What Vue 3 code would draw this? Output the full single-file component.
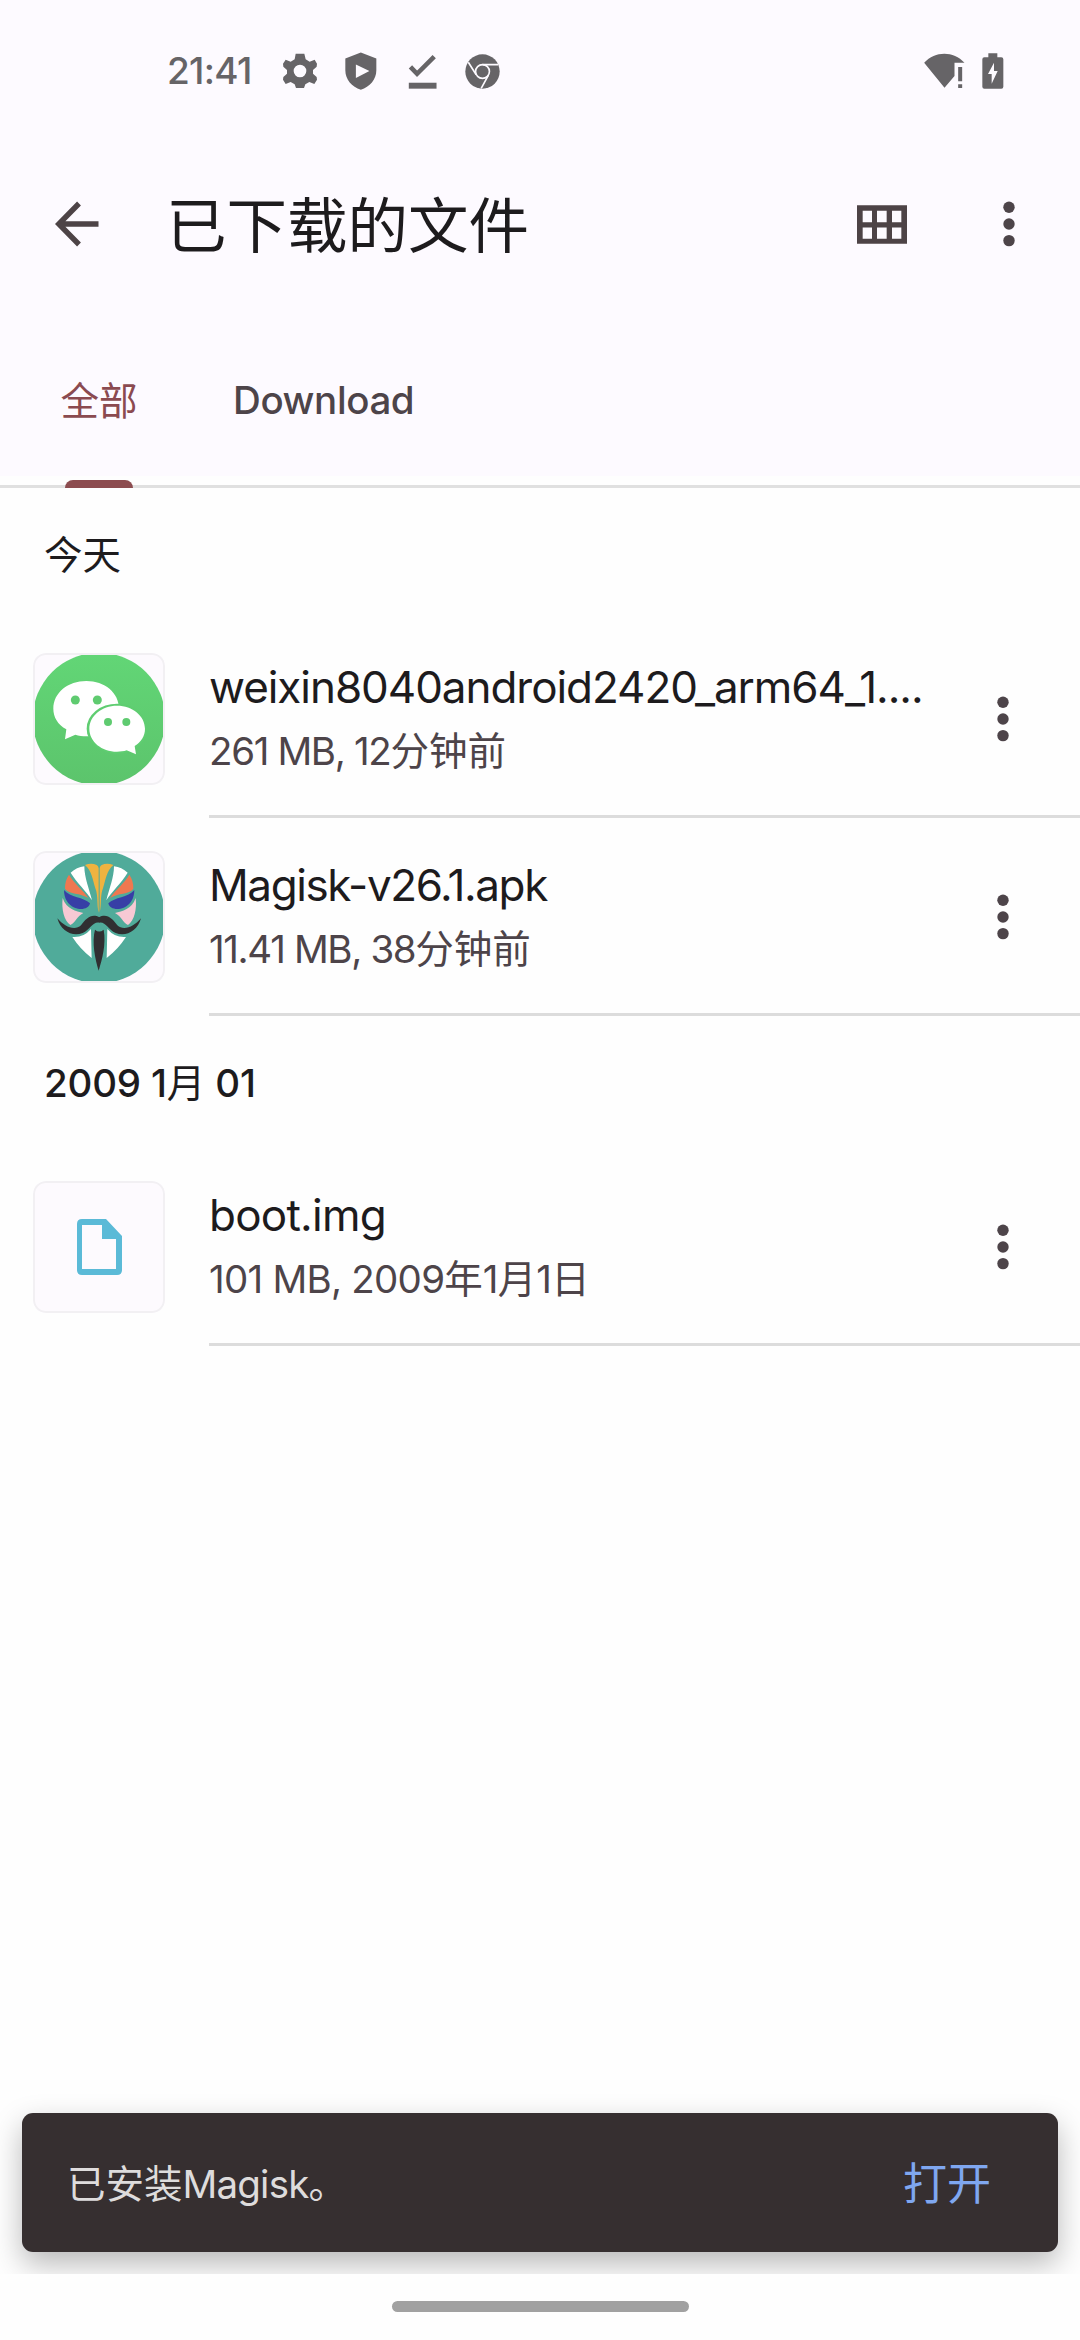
<script setup>
const sections = [
  {
    title: [{ t: '今天', cjk: true }],
    files: [
      {
        icon: 'wechat',
        name: 'weixin8040android2420_arm64_1....',
        fit: 'name-long',
        meta: [{ t: '261 MB, 12' }, { t: '分钟前', cjk: true }],
      },
      {
        icon: 'magisk',
        name: 'Magisk-v26.1.apk',
        fit: 'name-apk',
        meta: [{ t: '11.41 MB, 38' }, { t: '分钟前', cjk: true }],
      },
    ],
  },
  {
    title: [{ t: '2009 1' }, { t: '月', cjk: true }, { t: ' 01' }],
    files: [
      {
        icon: 'file',
        name: 'boot.img',
        fit: 'name-img',
        meta: [
          { t: '101 MB, 2009' },
          { t: '年', cjk: true },
          { t: '1' },
          { t: '月', cjk: true },
          { t: '1' },
          { t: '日', cjk: true },
        ],
      },
    ],
  },
]
</script>

<template>
  <div class="screen">
    <header class="top">
      <div class="status">
        <span class="clock">21:41</span>
        <svg class="st-gear" viewBox="400 70 102 108">
          <path fill="#666467" fill-rule="evenodd" d="M438 72h26l4 17 12 7 15-6 7 12 0 0-1 9-11 10v11l11 10 1 8-8 13-15-6-12 7-4 11h-24l-4-11-12-7-15 6-8-13 1-8 11-10v-11l-11-10-1-9 8-12 15 6 12-7zM451 105a19 19 0 1 0 0 38a19 19 0 1 0 0-38z" />
        </svg>
        <svg class="st-shield" viewBox="586 67 97 114">
          <path fill="#666467" fill-rule="evenodd" d="M634 68L681 86V122C681 150 661 173 634 181C607 173 587 150 587 122V86zM619 104V145L660 124z" />
        </svg>
        <svg class="st-done" viewBox="775 70 87 106">
          <path fill="none" stroke="#666467" stroke-width="14" d="M782 109L802 130L854 78" />
          <path fill="#666467" d="M777 157h84v18h-84z" />
        </svg>
        <svg class="st-chrome" viewBox="947 71 106 106">
          <circle cx="1000" cy="124" r="52" fill="#666467" />
          <g fill="none" stroke="#fdfaff" stroke-width="5">
            <circle cx="1000" cy="124" r="21" />
            <path d="M1000 103H1047M981 134L957 96M1018 135L996 175" />
          </g>
        </svg>
        <svg class="st-wifi" viewBox="72 68 122 108">
          <path fill="#666467" d="M72 97C105 61 160 61 193 97H163V137L133 172zM174 110h12v43h-12zM174 162h12v11h-12z" />
        </svg>
        <svg class="st-battery" viewBox="245 68 66 108">
          <path fill="#666467" fill-rule="evenodd" d="M264 69h27v12h12q6 0 6 6v82q0 6-6 6h-51q-6 0-6-6V87q0-6 6-6h12zM281 97L263 131H274V160L292 122H281z" />
        </svg>
      </div>

      <div class="appbar">
        <svg class="back" viewBox="0 0 44 46">
          <path fill="none" stroke="#4d4346" stroke-width="5.4" d="M43.5 23H5M24 2.5L3.8 23L24 43.5" />
        </svg>
        <h1>已下载的文件</h1>
        <svg class="grid" viewBox="81 73 150 116">
          <path fill="#4d4346" fill-rule="evenodd" d="M81 73h150v116H81zM98 90v34h28V90zM141 90v34h29V90zM186 90v34h28V90zM98 140v34h28v-34zM141 140v34h29v-34zM186 140v34h28v-34z" />
        </svg>
        <svg class="dots" viewBox="0 0 12 46">
          <circle cx="6" cy="6.3" r="5.7" /><circle cx="6" cy="23" r="5.7" /><circle cx="6" cy="39.6" r="5.7" />
        </svg>
      </div>

      <nav class="tabs">
        <div class="tab active"><span class="cjk">全部</span><i class="indicator"></i></div>
        <div class="tab"><span class="download">Download</span></div>
      </nav>
    </header>

    <main>
      <section v-for="(s, i) in sections" :key="i">
        <h2><span v-for="(p, k) in s.title" :key="k" :class="p.cjk ? 'cjk' : 'lat'">{{ p.t }}</span></h2>
        <article v-for="f in s.files" :key="f.name" class="row">
          <div class="thumb">
            <svg v-if="f.icon === 'wechat'" viewBox="39 39 396 396">
              <defs>
                <linearGradient id="green" x1="0" y1="0" x2="0" y2="1">
                  <stop offset="0" stop-color="#62d676" /><stop offset="1" stop-color="#5cc46c" />
                </linearGradient>
                <clipPath id="frameA"><rect x="45" y="45" width="384" height="384" /></clipPath>
              </defs>
              <circle cx="237" cy="237" r="199" fill="url(#green)" clip-path="url(#frameA)" />
              <path fill="#fff" d="M199 123C254 123 297 158 297 206C297 254 254 289 199 289C188 289 176 287 166 284L135 298L139 268C113 253 100 231 100 206C100 158 144 123 199 123z" />
              <ellipse cx="291" cy="266" rx="91" ry="75" fill="#5fcd71" />
              <path fill="#fff" d="M291 197C338 197 375 228 375 266C375 288 363 306 344 318L348 343L320 331C311 334 301 335 291 335C245 335 208 305 208 266C208 228 245 197 291 197z" />
              <g fill="#5fcb70">
                <circle cx="166" cy="180" r="13.5" /><circle cx="232" cy="180" r="13.5" />
                <circle cx="264" cy="246" r="12" /><circle cx="319" cy="246" r="12" />
              </g>
            </svg>
            <svg v-else-if="f.icon === 'magisk'" viewBox="39 33 396 396">
              <defs>
                <clipPath id="frameB"><rect x="45" y="39" width="384" height="384" /></clipPath>
                <g id="half">
                  <path fill="#fff" d="M152 98Q170 82 193 79C193 112 207 145 216 181C199 154 171 129 152 98z" />
                  <path fill="#efb340" d="M195 75Q214 68 230 75Q235 78 236 85V218C230 197 235 167 226 145C218 119 215 91 195 75z" />
                  <path fill="#ef7850" d="M147 104C161 129 188 149 205 174C181 158 148 164 135 146Q134 123 147 104z" />
                  <path fill="#373fa6" d="M132 150C151 173 191 171 210 190C207 206 184 212 164 203C143 194 132 175 132 150z" />
                  <path fill="#f7c9d4" d="M128 174C140 209 168 213 190 219C170 229 166 249 151 255C132 242 124 207 128 174z" />
                  <path fill="#fff" d="M157 291Q190 294 213 267L215 354Q181 328 157 291z" />
                  <path fill="#302f31" d="M238 232C214 219 197 237 183 256C164 274 133 260 112 235C122 273 158 292 188 279C211 269 218 244 238 248z" />
                </g>
              </defs>
              <circle cx="237" cy="231" r="199" fill="#50ab9a" clip-path="url(#frameB)" />
              <use href="#half" />
              <use href="#half" transform="matrix(-1 0 0 1 475 0)" />
              <path fill="#302f31" d="M225 269Q237 280 251 269C259 313 246 358 236 392C225 356 215 306 225 269z" />
            </svg>
            <svg v-else viewBox="0 0 132 132">
              <path fill="#5bbad7" fill-rule="evenodd" d="M49 38h24l16 17v34q0 5-5 5H49q-5 0-5-5V43q0-5 5-5zM49 44v44h34V58H69V44z" />
            </svg>
          </div>
          <div class="body">
            <div class="text">
              <div class="name" :class="f.fit">{{ f.name }}</div>
              <div class="meta" :class="f.icon"><span v-for="(p, k) in f.meta" :key="k" :class="p.cjk ? 'cjk' : 'lat'">{{ p.t }}</span></div>
            </div>
            <svg class="dots" viewBox="0 0 12 46">
              <circle cx="6" cy="6.3" r="5.7" /><circle cx="6" cy="23" r="5.7" /><circle cx="6" cy="39.6" r="5.7" />
            </svg>
          </div>
        </article>
      </section>
      <div class="snackbar">
        <span class="msg">已安装<span class="lat">Magisk</span>。</span>
        <span class="action">打开</span>
      </div>
    </main>
    <footer class="navbar"><i></i></footer>
  </div>
</template>

<style>
body { background: #fefefe; }
</style>

<style scoped>
* { box-sizing: border-box; }
.screen {
  width: 1080px; height: 2340px; overflow: hidden;
  display: flex; flex-direction: column;
  background: #fefefe; color: #1d1b1d;
  font-family: Inter, "Noto Sans CJK SC", sans-serif;
  white-space: pre;
}
svg { display: block; flex: none; }
.cjk { font-family: "Noto Sans CJK SC", sans-serif; letter-spacing: 0; }
.top {
  height: 488px; flex: none; display: flex; flex-direction: column;
  background: linear-gradient(#fdfaff 476px, #fefefe 476px);
  border-bottom: 3px solid #e0e0e0;
}
.status { height: 142px; flex: none; display: flex; align-items: center; padding: 0 76px 0 167px; color: #666467; }
.clock { width: 116px; font-size: 37px; font-weight: 500; line-height: 40px; letter-spacing: -0.7px; }
.st-gear { width: 34px; height: 36px; margin-right: 28px; }
.st-shield { width: 32px; height: 38px; margin-right: 31px; }
.st-done { width: 29px; height: 35px; margin-right: 28px; }
.st-chrome { width: 35px; height: 35px; margin-right: auto; }
.st-wifi { width: 41px; height: 36px; margin-right: 17px; }
.st-battery { width: 22px; height: 36px; }
.appbar { height: 164px; flex: none; display: flex; align-items: center; padding: 0 65px 0 55px; }
.back { width: 44px; height: 46px; }
h1 {
  flex: 1; margin: 0 0 5px 67px; font-size: 60.5px; line-height: 80px; font-weight: 400;
  font-family: "Noto Sans CJK SC", sans-serif;
}
.grid { width: 50px; height: 39px; margin-right: 96px; }
.dots { width: 12px; height: 46px; fill: #4d4449; }
.tabs { height: 182px; flex: none; display: flex; padding-left: 60px; font-size: 38.5px; color: #4d4449; }
.tab { height: 182px; display: flex; flex-direction: column; align-items: center; padding-top: 69px; line-height: 50px; }
.tab.active { width: 78px; margin-right: 95px; padding-top: 67px; color: #8b4a50; }
.indicator { width: 68px; height: 8px; margin-top: 57px; flex: none; background: #8c4c4f; border-radius: 8px 8px 0 0; }
.download { font-weight: 500; letter-spacing: -0.4px; }
main { flex: 1; min-height: 0; overflow: hidden; display: flex; flex-direction: column; }
h2 { margin: 0; height: 132px; padding: 1px 0 0 44px; font-size: 38.5px; line-height: 132px; font-weight: 400; display: flex; }
h2 .lat { font-weight: 500; letter-spacing: -0.2px; }
h2 .cjk, .meta .cjk { margin-top: -3px; }
.row { height: 198px; display: flex; padding-left: 33px; }
.thumb {
  width: 132px; height: 132px; margin: 33px 44px 0 0; position: relative; flex: none;
  background: #fdfafe; border-radius: 13px; overflow: hidden;
}
.thumb::after { content: ""; position: absolute; inset: 0; border: 2px solid #f2f0f3; border-radius: 13px; }
.thumb svg { width: 132px; height: 132px; }
.body { flex: 1; display: flex; align-items: center; border-bottom: 3px solid #dcdcdc; padding: 2px 71px 0 0; }
.text { flex: 1; }
.name { font-size: 44px; line-height: 64px; }
.name-long { letter-spacing: -1.05px; }
.name-apk { letter-spacing: -1.4px; }
.name-img { letter-spacing: -0.75px; }
.meta { height: 64px; font-size: 38.5px; line-height: 64px; color: #4d4449; display: flex; }
.meta .lat { letter-spacing: -1.35px; }
.meta.file .lat { letter-spacing: -0.75px; }
.snackbar {
  width: 1036px; height: 139px; margin: auto 22px 22px; flex: none; border-radius: 11px;
  display: flex; align-items: center; justify-content: space-between; padding: 0 67px 1px 45px;
  background: #362f30; box-shadow: 0 12px 30px rgba(0, 0, 0, 0.28);
  font-family: "Noto Sans CJK SC", sans-serif;
}
.msg { font-size: 38.5px; line-height: 50px; color: #dedcdc; }
.msg .lat { font-family: Inter, sans-serif; letter-spacing: -0.8px; }
.action { font-size: 44px; line-height: 60px; margin-bottom: 2px; color: #7fa7f0; }
.navbar { height: 66px; flex: none; display: flex; justify-content: center; padding-top: 27px; }
.navbar i { width: 297px; height: 11px; border-radius: 6px; background: #a1a1a1; }
</style>
